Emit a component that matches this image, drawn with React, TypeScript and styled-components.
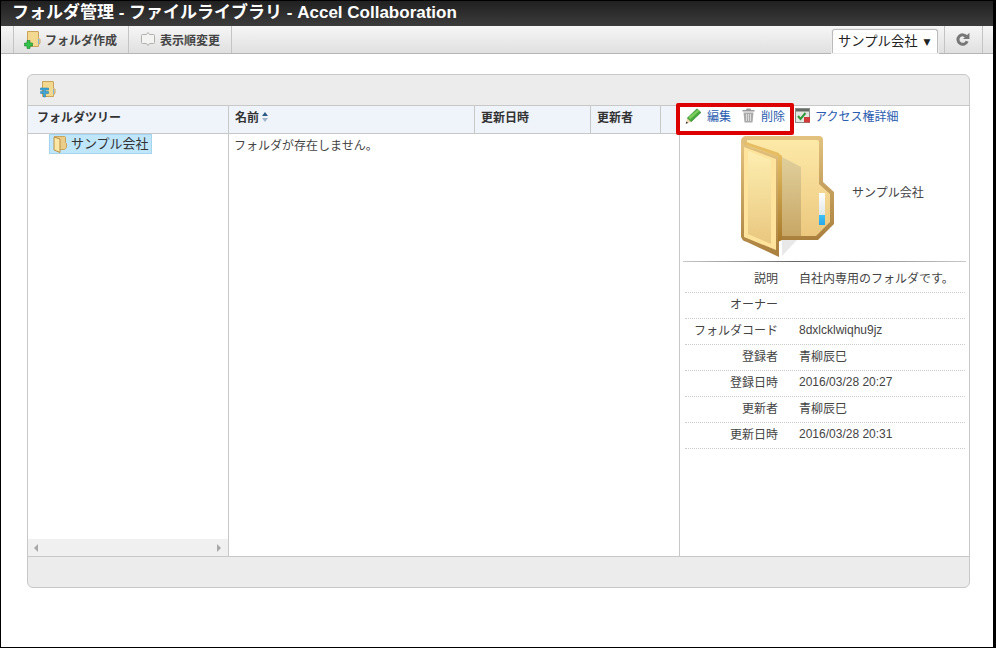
import React from "react";
import styled, { createGlobalStyle } from "styled-components";

const FONT = `"Liberation Sans", Arial, "Noto Sans CJK JP", sans-serif`;

const GlobalStyle = createGlobalStyle`
  html, body { margin: 0; padding: 0; background: #fff; }
  body { font-family: ${FONT}; font-size: 12px; color: #333; }
  * { box-sizing: border-box; }
`;

const details = [
  { label: "説明", value: "自社内専用のフォルダです。" },
  { label: "オーナー", value: "" },
  { label: "フォルダコード", value: "8dxlcklwiqhu9jz" },
  { label: "登録者", value: "青柳辰巳" },
  { label: "登録日時", value: "2016/03/28 20:27" },
  { label: "更新者", value: "青柳辰巳" },
  { label: "更新日時", value: "2016/03/28 20:31" },
];

const SmallFolder = () => (
  <svg width="16" height="16" viewBox="0 0 16 16">
    <path d="M2.500 0.500H13a.5.5 0 0 1 .5.500v6l1.500 1.500v3.500L13.500 14v1.500H2.500z" fill="#f3d88f" stroke="#c9a25c" />
    <path d="M13.500 8v5" stroke="#7fb6d8" />
  </svg>
);

const TreeFolder = () => (
  <svg width="14" height="17" viewBox="0 0 14 17">
    <path d="M1.500 0.500h10a1 1 0 0 1 1 1v5l1 1v4l-2 2h-10z" fill="#e9cd88" stroke="#c9a25c" />
    <path d="M1 1l6 2v13.500L1 14z" fill="#fbe6a4" stroke="#b98f45" />
  </svg>
);

const App = () => (
  <>
    <GlobalStyle />
    <Page>
      <TitleBar>フォルダ管理 - ファイルライブラリ - Accel Collaboration</TitleBar>
      <Toolbar>
        <ToolGroup>
          <ToolButton>
            <IconWrap>
              <SmallFolder />
              <PlusBadge>
                <svg width="9" height="9" viewBox="0 0 9 9">
                  <path d="M3 0.500h3v2.500h2.500v3H6v2.500H3V6H0.500V3H3z" fill="#35c24c" stroke="#17852a" strokeWidth="0.6" />
                </svg>
              </PlusBadge>
            </IconWrap>
            フォルダ作成
          </ToolButton>
          <ToolButton>
            <svg width="16" height="16" viewBox="0 0 16 16">
              <path
                d="M2.500 3.500H6.500L8 1.500 9.500 3.500H13.500a1 1 0 0 1 1 1v7a1 1 0 0 1-1 1H9.500L8 14.500 6.500 12.500H2.500a1 1 0 0 1-1-1v-7a1 1 0 0 1 1-1z"
                fill="#f3f3f1"
                stroke="#b0b0ac"
              />
            </svg>
            表示順変更
          </ToolButton>
        </ToolGroup>
        <ToolRight>
          <CompanySelect>
            サンプル会社<Caret>▼</Caret>
          </CompanySelect>
          <RefreshCell>
            <RefreshIcon width="15" height="15" viewBox="0 0 14 14">
              <path d="M10.800 4.600A4.400 4.400 0 1 0 11.300 8.600" fill="none" stroke="#777" strokeWidth="2.800" />
              <path d="M7.500 6.500H13.500V0.800z" fill="#777" />
            </RefreshIcon>
          </RefreshCell>
        </ToolRight>
      </Toolbar>
      <Content>
        <Panel>
          <PanelHead>
            <IconWrap>
              <SmallFolder />
              <TreeBadge>
                <svg width="10" height="11" viewBox="0 0 10 11">
                  <path d="M0.500 1h8v2H5.500v1.500h3v2h-3V10h-2V6.500H0.500v-2h3V3H0.500z" fill="#3ea6dc" stroke="#1c79a8" strokeWidth="0.5" />
                </svg>
              </TreeBadge>
            </IconWrap>
          </PanelHead>
          <PanelBody>
            <TreeColumn>
              <HeadCell $indent={9}>フォルダツリー</HeadCell>
              <TreeBody>
                <TreeNode>
                  <TreeFolder />
                  サンプル会社
                </TreeNode>
              </TreeBody>
              <ScrollBar>
                <Arrow $dir="left" />
                <Arrow $dir="right" />
              </ScrollBar>
            </TreeColumn>
            <ListColumn>
              <HeadRow>
                <HeadCell $width={245}>
                  名前
                  <SortMark>
                    <SortUp />
                    <SortDown />
                  </SortMark>
                </HeadCell>
                <HeadCell $width={116}>更新日時</HeadCell>
                <HeadCell $width={70}>更新者</HeadCell>
                <HeadCell $width={19} />
              </HeadRow>
              <EmptyText>フォルダが存在しません。</EmptyText>
            </ListColumn>
            <DetailColumn>
              <ActionRow>
                <ActionLink>
                  <svg width="17" height="16" viewBox="0 0 17 16">
                    <path d="M12 0.800l4 3.700L6 14l-4-3.700z" fill="#46a83c" stroke="#2c7c2a" strokeWidth="0.5" />
                    <path d="M3.500 9l9.500-7.500 1.500 1.300L5 11.500z" fill="#7ccf5e" />
                    <path d="M2 10.300L6 14l-5 1.500z" fill="#ecd9b0" />
                    <path d="M0.700 15.800l.6-2.400 1.900 1.700z" fill="#333" />
                  </svg>
                  編集
                </ActionLink>
                <ActionLink>
                  <svg width="15" height="15" viewBox="0 0 14 15">
                    <path d="M5 .5h4l.5 1.500H13v1.500H1V2h3.500z" fill="#999" />
                    <path d="M2 4.500h10L11 14.500H3z" fill="#aaa" />
                    <path d="M5 6v7M7 6v7M9 6v7" stroke="#ddd" />
                  </svg>
                  削除
                </ActionLink>
                <ActionLink>
                  <svg width="15" height="15" viewBox="0 0 15 15">
                    <rect x="0.500" y="0.500" width="14" height="14" fill="#e4e6e2" stroke="#8a8e88" />
                    <rect x="1" y="1" width="13" height="2.500" fill="#686c66" />
                    <path d="M3 8l2.500 3L10.500 5" fill="none" stroke="#2f9a3a" strokeWidth="2" />
                    <rect x="9" y="9" width="6" height="5.500" fill="#d23b3b" />
                  </svg>
                  アクセス権詳細
                </ActionLink>
              </ActionRow>
              <FolderSummary>
                <BigFolder>
                  <svg width="94" height="122" viewBox="0 0 94 122">
                    <defs>
                      <linearGradient id="back" x1="0" y1="0" x2="0" y2="1">
                        <stop offset="0" stopColor="#fde9a8" />
                        <stop offset="1" stopColor="#ecc87e" />
                      </linearGradient>
                      <linearGradient id="rim" x1="0" y1="0" x2="0" y2="1">
                        <stop offset="0" stopColor="#e3c27f" />
                        <stop offset="1" stopColor="#a97f3d" />
                      </linearGradient>
                      <linearGradient id="front" x1="0" y1="0" x2="0" y2="1">
                        <stop offset="0" stopColor="#fdeeb0" />
                        <stop offset="1" stopColor="#e9c77f" />
                      </linearGradient>
                      <linearGradient id="shade" x1="0" y1="0" x2="0" y2="1">
                        <stop offset="0" stopColor="#e0cf9c" />
                        <stop offset="1" stopColor="#c8a765" />
                      </linearGradient>
                      <linearGradient id="edge" x1="0" y1="0" x2="0" y2="1">
                        <stop offset="0" stopColor="#e6bd62" />
                        <stop offset="1" stopColor="#a67a2a" />
                      </linearGradient>
                      <linearGradient id="meter" x1="0" y1="0" x2="0" y2="1">
                        <stop offset="0" stopColor="#ffffff" />
                        <stop offset="0.68" stopColor="#dfe7e6" />
                        <stop offset="0.69" stopColor="#3fc0f5" />
                        <stop offset="1" stopColor="#2aa9e8" />
                      </linearGradient>
                    </defs>
                    <path d="M5 0h73a4 4 0 0 1 4 4v42l11 10v32L77 104H5a5 5 0 0 1-5-5V5a5 5 0 0 1 5-5z" fill="url(#rim)" />
                    <path d="M6 4h70a2 2 0 0 1 2 2v42l11 10v28L75 100H6z" fill="url(#back)" />
                    <path d="M41 21l19 10v69H41z" fill="url(#shade)" />
                    <path d="M41 104h15L41 120z" fill="#e8e8e8" />
                    <rect x="78" y="57" width="6" height="32" fill="url(#meter)" />
                    <path d="M0 7l38 14v100L6 106a7 7 0 0 1-6-6z" fill="url(#rim)" />
                    <path d="M3 11l32 12v91L3 101z" fill="#fde39b" />
                    <path d="M7 15l23 9v84L7 98z" fill="url(#front)" />
                    <path d="M37 17l4 3v84l-4 2z" fill="url(#edge)" />
                    <path d="M5 6l33 11v4L3 8z" fill="#e6bd62" />
                  </svg>
                </BigFolder>
                <FolderName>サンプル会社</FolderName>
              </FolderSummary>
              <DetailTable>
                {details.map((d) => (
                  <DetailRow key={d.label}>
                    <DetailLabel>{d.label}</DetailLabel>
                    <DetailValue>{d.value}</DetailValue>
                  </DetailRow>
                ))}
              </DetailTable>
            </DetailColumn>
            <Highlight />
          </PanelBody>
          <PanelFoot />
        </Panel>
      </Content>
    </Page>
  </>
);

export default App;

const Page = styled.div`
  width: 996px;
  height: 648px;
  border: 1px solid #000;
  border-right-width: 3px;
  background: #fff;
  display: flex;
  flex-direction: column;
  overflow: hidden;
`;

const TitleBar = styled.div`
  height: 25px;
  padding-left: 11px;
  background: linear-gradient(#202020, #3c3c3c);
  color: #fff;
  font-size: 17px;
  font-weight: bold;
  line-height: 24px;
  white-space: nowrap;
`;

const Toolbar = styled.div`
  height: 28px;
  display: flex;
  justify-content: space-between;
  background: linear-gradient(#f6f6f6, #e0e0e0);
  border-bottom: 1px solid #b5b5b5;
`;

const ToolGroup = styled.div`
  display: flex;
  margin-left: 12px;
  border-left: 1px solid #c4c4c4;
`;

const ToolButton = styled.div`
  display: flex;
  align-items: center;
  gap: 4px;
  padding: 0 11px 1px;
  border-right: 1px solid #c4c4c4;
  font-size: 12px;
  font-weight: bold;
  color: #444;
`;

const IconWrap = styled.span`
  position: relative;
  display: inline-flex;
  width: 16px;
  height: 16px;
`;

const PlusBadge = styled.span`
  position: absolute;
  left: -1px;
  bottom: -2px;
  line-height: 0;
`;

const TreeBadge = styled.span`
  position: absolute;
  left: 0;
  bottom: -1px;
  line-height: 0;
`;

const ToolRight = styled.div`
  display: flex;
  align-items: flex-end;
  margin-right: 10px;
`;

const CompanySelect = styled.div`
  width: 106px;
  height: 24px;
  padding-left: 5px;
  border: 1px solid #bbb;
  border-bottom: none;
  border-radius: 3px 3px 0 0;
  background: #fff;
  box-shadow: 0 0 0 1px #ededed;
  color: #222;
  font-size: 13.33px;
  line-height: 24px;
  white-space: nowrap;
  margin-right: 6px;
`;

const Caret = styled.span`
  margin-left: 6px;
  font-size: 9px;
  font-family: "DejaVu Sans", sans-serif;
  vertical-align: 1px;
`;

const RefreshCell = styled.div`
  width: 39px;
  height: 27px;
  display: flex;
  align-items: center;
  justify-content: center;
  border-left: 1px solid #c4c4c4;
  border-right: 1px solid #c4c4c4;
`;

const RefreshIcon = styled.svg`
  margin-right: 2px;
`;

const Content = styled.div`
  flex: 1;
  padding: 20px 23px 0 26px;
`;

const Panel = styled.div`
  height: 514px;
  border: 1px solid #c8c8c8;
  border-radius: 6px;
  display: flex;
  flex-direction: column;
  overflow: hidden;
  background: #ececec;
`;

const PanelHead = styled.div`
  height: 31px;
  padding: 6px 0 0 12px;
  border-bottom: 1px solid #c8c8c8;
`;

const PanelBody = styled.div`
  position: relative;
  height: 451px;
  display: flex;
  background: #fff;
  border-bottom: 1px solid #c8c8c8;
`;

const PanelFoot = styled.div`
  flex: 1;
`;

const TreeColumn = styled.div`
  width: 201px;
  display: flex;
  flex-direction: column;
  border-right: 1px solid #c8c8c8;
`;

const HeadCell = styled.div<{ $width?: number; $indent?: number }>`
  ${(p) => (p.$width ? `width: ${p.$width}px;` : "")}
  height: 28px;
  padding: 0 0 6px ${(p) => p.$indent ?? 6}px;
  display: flex;
  align-items: center;
  gap: 3px;
  flex-shrink: 0;
  background: #eff3fa;
  border-bottom: 1px solid #c8c8c8;
  font-size: 12px;
  font-weight: bold;
  color: #333;
  & + & {
    border-left: 1px solid #c8c8c8;
  }
`;

const TreeBody = styled.div`
  flex: 1;
  padding-left: 21px;
`;

const TreeNode = styled.div`
  display: inline-flex;
  align-items: center;
  gap: 4px;
  height: 20px;
  padding: 0 2px 4px 3px;
  background: #bfe6fb;
  border: 1px solid #a5d5ee;
  font-size: 13px;
  color: #333;
  svg {
    margin-top: 4px;
  }
`;

const ScrollBar = styled.div`
  height: 17px;
  padding: 0 7px 0 6px;
  display: flex;
  align-items: center;
  justify-content: space-between;
  background: #f0f0f0;
`;

const Arrow = styled.span<{ $dir: "left" | "right" }>`
  width: 0;
  height: 0;
  border-top: 4px solid transparent;
  border-bottom: 4px solid transparent;
  ${(p) => (p.$dir === "left" ? "border-right: 4px solid #a8a8a8;" : "border-left: 4px solid #a8a8a8;")}
`;

const ListColumn = styled.div`
  width: 451px;
  border-right: 1px solid #c8c8c8;
`;

const HeadRow = styled.div`
  display: flex;
`;

const SortMark = styled.span`
  display: inline-flex;
  flex-direction: column;
  gap: 2px;
`;

const SortUp = styled.span`
  border-left: 3px solid transparent;
  border-right: 3px solid transparent;
  border-bottom: 4px solid #2b5a84;
`;

const SortDown = styled.span`
  border-left: 3px solid transparent;
  border-right: 3px solid transparent;
  border-top: 4px solid #9fb4c8;
`;

const EmptyText = styled.div`
  padding: 2px 0 0 5px;
  font-size: 12px;
  color: #444;
`;

const DetailColumn = styled.div`
  flex: 1;
  padding: 0 3px;
`;

const ActionRow = styled.div`
  height: 18px;
  display: flex;
  align-items: flex-end;
  gap: 10px;
  padding-left: 2px;
`;

const ActionLink = styled.span`
  display: inline-flex;
  align-items: center;
  gap: 5px;
  color: #2a5db0;
  font-size: 12px;
`;

const FolderSummary = styled.div`
  height: 138px;
  display: flex;
  align-items: center;
  border-bottom: 1px solid;
  border-image: linear-gradient(90deg, #c8c8c8, #666 40%, #c8c8c8) 1;
`;

const BigFolder = styled.div`
  align-self: flex-start;
  margin: 12px 0 0 58px;
  line-height: 0;
`;

const FolderName = styled.div`
  margin: 0 0 3px 17px;
  font-size: 12px;
  color: #444;
`;

const DetailTable = styled.div`
  padding-top: 5px;
`;

const DetailRow = styled.div`
  height: 26px;
  margin: 0 1px 0 2px;
  padding-bottom: 4px;
  display: flex;
  align-items: center;
  border-bottom: 1px dotted #ccc;
`;

const DetailLabel = styled.div`
  width: 93px;
  text-align: right;
  font-size: 12px;
  color: #444;
`;

const DetailValue = styled.div`
  margin-left: 21px;
  font-size: 12px;
  color: #444;
`;

const Highlight = styled.div`
  position: absolute;
  left: 648px;
  top: -3px;
  width: 118px;
  height: 32px;
  border: 4px solid #dc0000;
  border-radius: 2px;
  pointer-events: none;
`;
